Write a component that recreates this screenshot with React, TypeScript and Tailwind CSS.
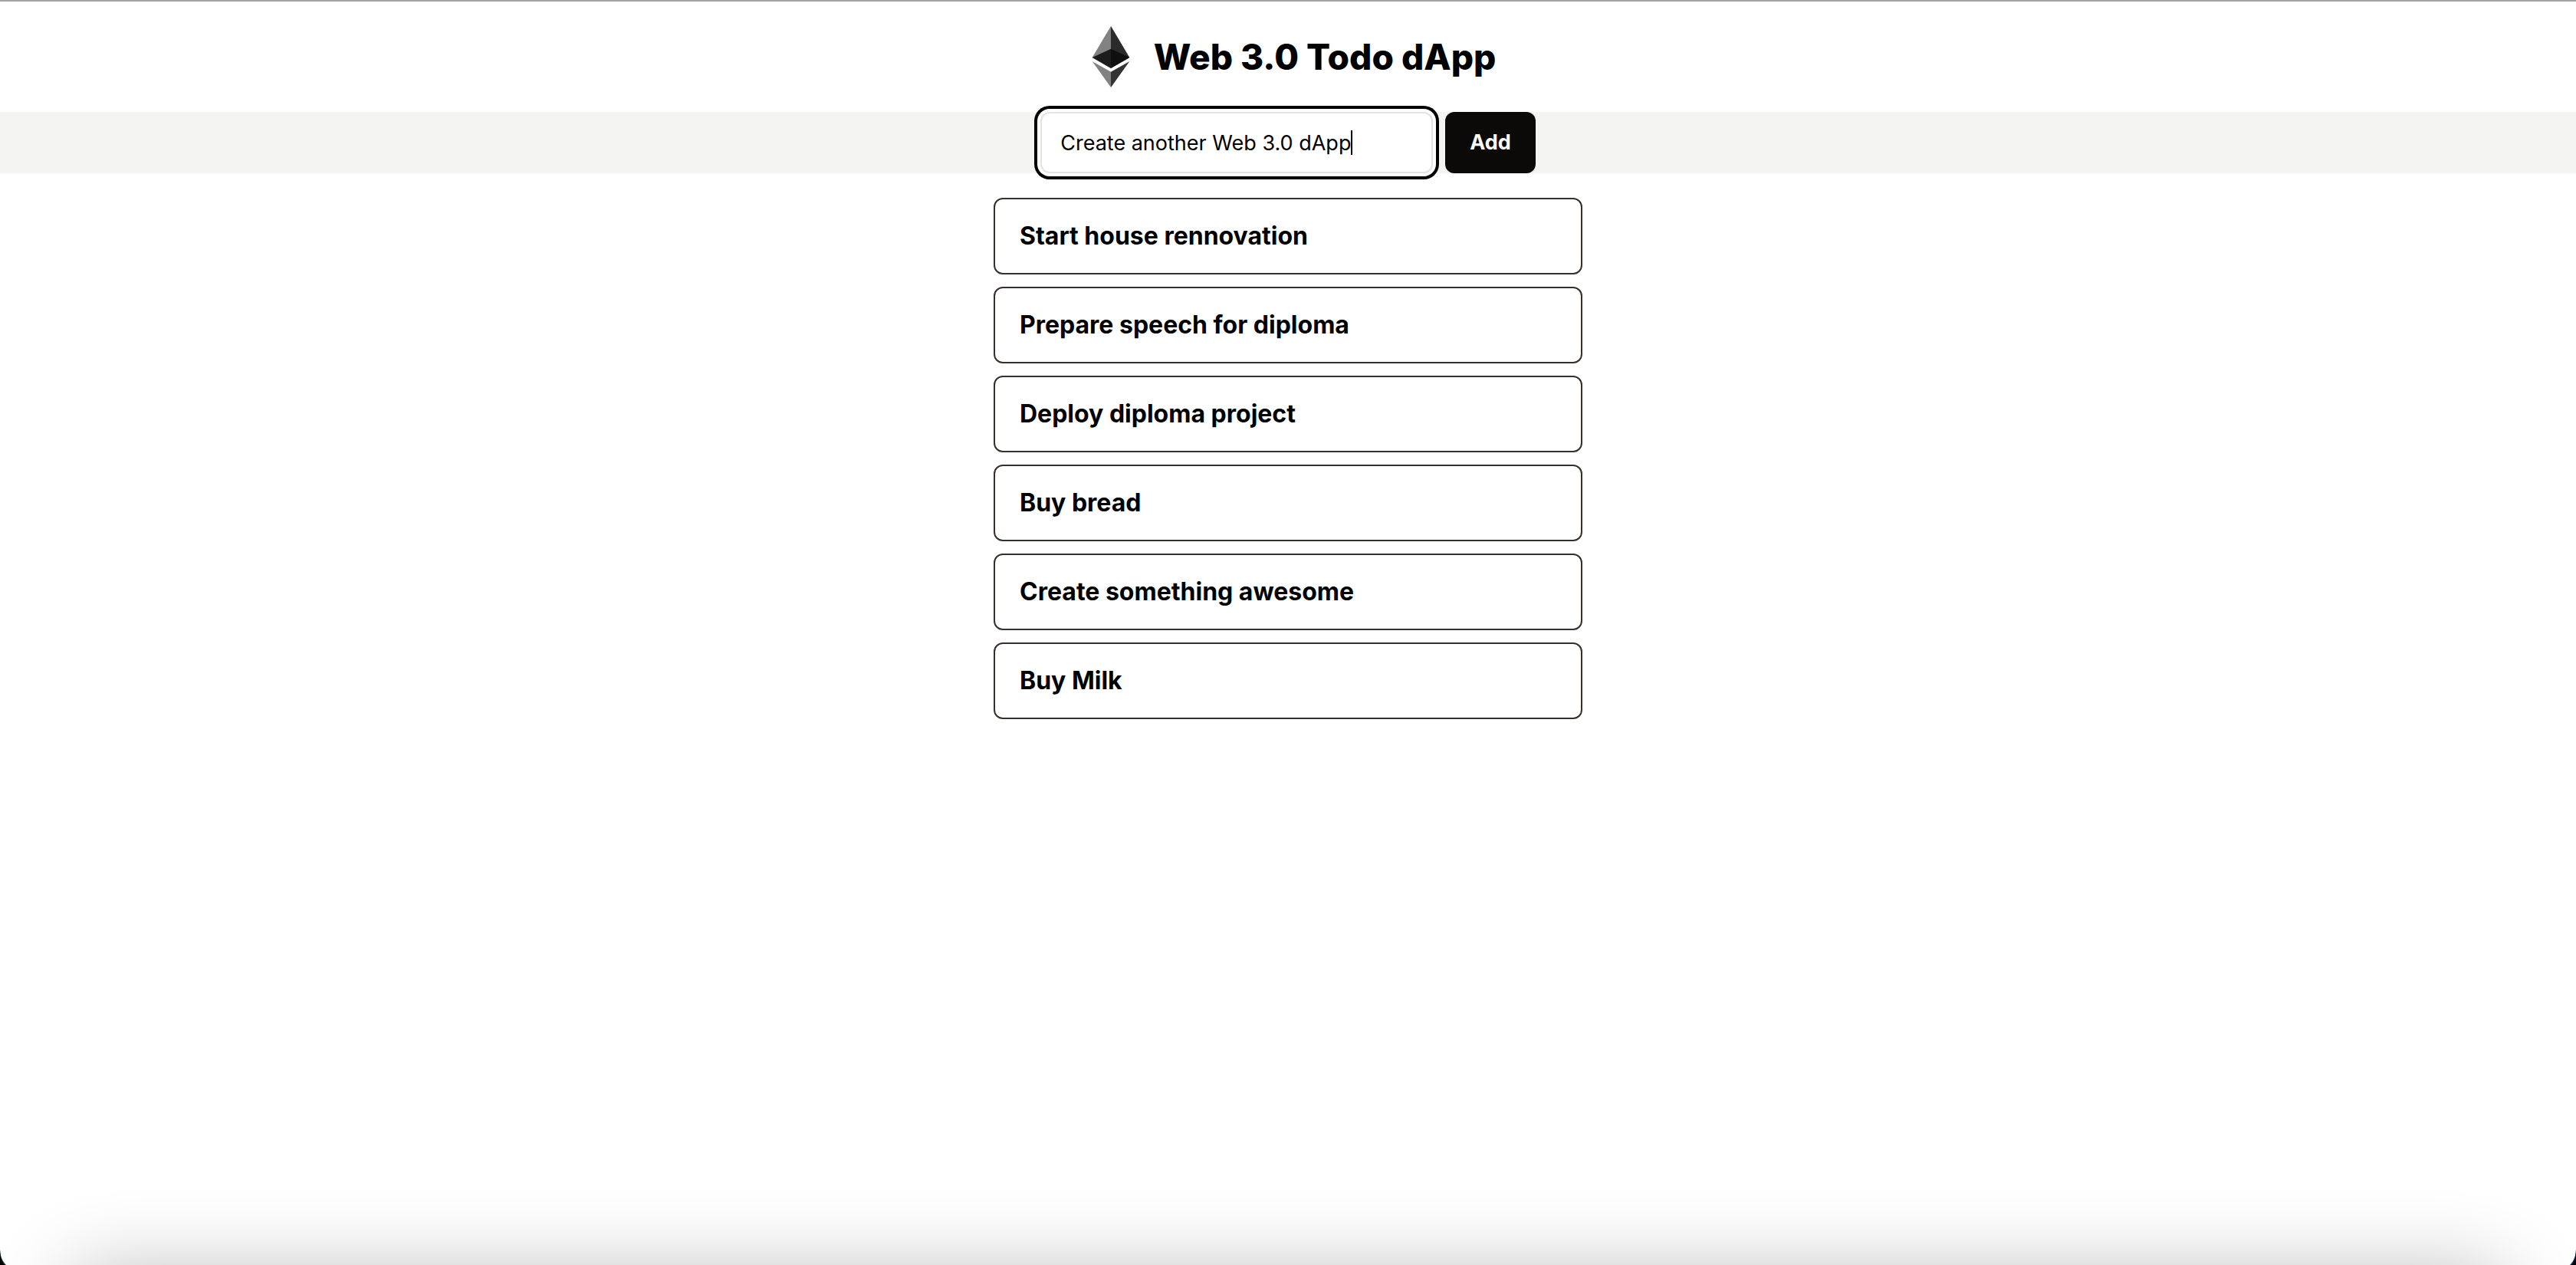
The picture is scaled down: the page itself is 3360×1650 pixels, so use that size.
import { useState, type FormEvent } from "react";

const initialTodos = [
  "Start house rennovation",
  "Prepare speech for diploma",
  "Deploy diploma project",
  "Buy bread",
  "Create something awesome",
  "Buy Milk",
];

function EthereumLogo() {
  return (
    <svg viewBox="0 0 80 80" className="size-20" role="img" aria-label="Ethereum">
      <path d="M40 0 15.7 41 40 55Z" fill="#828282" />
      <path d="M40 0 64.3 41 40 55Z" fill="#2b2b2b" />
      <path d="M40 29.7 15.7 41 40 55Z" fill="#1c1c1c" />
      <path d="M40 29.7 64.3 41 40 55Z" fill="#0f0f0f" />
      <path d="M15.7 46 40 59.7V80Z" fill="#828282" />
      <path d="M64.3 46 40 59.7V80Z" fill="#343434" />
    </svg>
  );
}

function TodoForm({ onAdd }: { onAdd: (text: string) => void }) {
  const [text, setText] = useState("Create another Web 3.0 dApp");

  const submit = (event: FormEvent) => {
    event.preventDefault();
    if (text.trim()) {
      onAdd(text);
      setText("");
    }
  };

  return (
    <form onSubmit={submit} className="flex justify-center gap-4 bg-[#f4f4f2]">
      <div className="relative">
        <input
          type="text"
          aria-label="New todo"
          value={text}
          onChange={(event) => setText(event.target.value)}
          className="h-20 w-[512px] rounded-xl border-2 border-[#e3e3e3] bg-white px-6 text-[27px] caret-transparent shadow-[0_0_0_4px_#fff,0_0_0_8px_#000] outline-none"
        />
        <span
          aria-hidden="true"
          className="pointer-events-none absolute inset-y-0 left-[26px] flex items-center text-[27px]"
        >
          <span className="invisible whitespace-pre">{text}</span>
          <span className="h-8 w-0.5 bg-black" />
        </span>
      </div>
      <button type="submit" className="h-20 rounded-xl bg-[#0c0a09] px-8 text-[27px] font-bold text-[#fafaf9]">
        Add
      </button>
    </form>
  );
}

function WindowCorner({ className, edge }: { className: string; edge: string }) {
  return (
    <svg viewBox="0 0 8 20" className={className} aria-hidden="true">
      <path d="M0 0C0.5 9 3 15 8 20H0Z" fill={edge} />
      <path d="M0 0C0.3 10 2 16 6 20H0Z" fill="#000" />
    </svg>
  );
}

export default function App() {
  const [todos, setTodos] = useState(initialTodos);

  return (
    <div className="relative min-h-screen overflow-hidden border-t-2 border-[#a5a3aa] bg-white font-['Inter',sans-serif] text-black">
      <header className="flex items-center justify-center gap-4 py-8">
        <EthereumLogo />
        <h1 className="text-[46px] leading-none font-extrabold">Web 3.0 Todo dApp</h1>
      </header>
      <main>
        <TodoForm onAdd={(text) => setTodos([text, ...todos])} />
        <ul className="mx-auto mt-8 flex max-w-3xl flex-col gap-4">
          {todos.map((todo) => (
            <li
              key={todo}
              className="rounded-xl border-2 border-[#36302d] px-8 py-6 text-[32px] leading-12 font-bold"
            >
              {todo}
            </li>
          ))}
        </ul>
      </main>
      <div className="pointer-events-none absolute inset-x-24 top-full h-40 translate-y-4 shadow-[0_0_110px_rgba(0,0,0,0.3)]" />
      <WindowCorner className="absolute bottom-0 left-0 h-5 w-2" edge="#17352c" />
      <WindowCorner className="absolute right-0 bottom-0 h-5 w-2 -scale-x-100" edge="#173a63" />
    </div>
  );
}
